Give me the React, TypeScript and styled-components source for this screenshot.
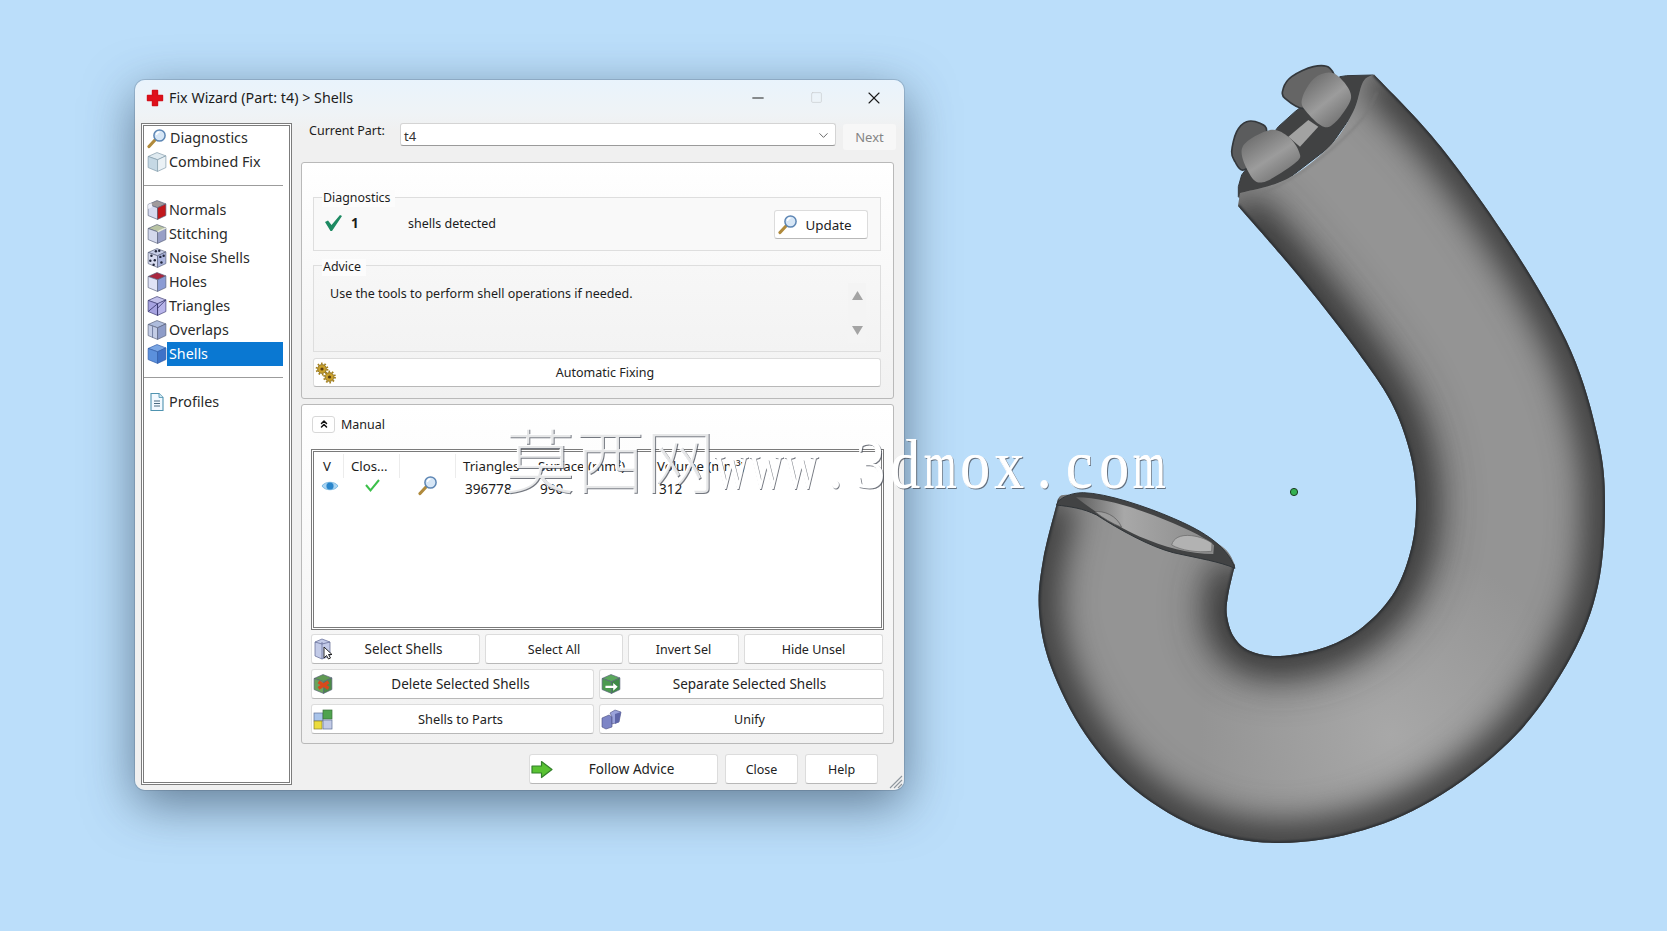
import React from "react";
import styled, { createGlobalStyle } from "styled-components";
import { ChevronDown, ChevronsUp, Minus, Square, X } from "lucide-react";

const Global = createGlobalStyle`
  html, body {
    margin: 0;
    height: 100%;
    background: #bbdefa;
    overflow: hidden;
  }
  * { box-sizing: border-box; }
`;

const Stage = styled.div`
  position: relative;
  display: flex;
  align-items: flex-start;
  width: 1667px;
  height: 931px;
  padding: 60px 0 0 135px;
  font-family: "Noto Sans", "Open Sans", sans-serif;
  color: #1c1c1c;
`;

const Win = styled.div`
  position: relative;
  display: flex;
  flex-direction: column;
  flex: 0 0 769px;
  min-width: 0;
  height: 710px;
  margin-top: 20px;
  border-radius: 10px;
  background: linear-gradient(#e9f3fc 0, #eff3f6 34px, #f0f0f0 50px);
  box-shadow: 0 14px 50px rgba(40, 62, 84, 0.62), 0 0 0 1px rgba(120, 140, 160, 0.35);
`;

const TitleBar = styled.div`
  display: flex;
  align-items: center;
  height: 35px;
  margin-bottom: 8px;
  padding: 0 1px 0 11px;
  flex: none;
`;

const Title = styled.div`
  margin-left: 5px;
  flex: 1;
  font-size: 14.3px;
`;

const Ctl = styled.div<{ $dim?: boolean }>`
  display: flex;
  align-items: center;
  justify-content: center;
  width: 58px;
  height: 35px;
  color: ${(p) => (p.$dim ? "#c6c9cc" : "#1a1a1a")};
`;

const Body = styled.div`
  display: flex;
  flex: 1;
  min-height: 0;
  padding: 0 10px 5px 6px;
  gap: 9px;
`;

const Side = styled.div`
  display: flex;
  flex-direction: column;
  flex: 0 0 151px;
  background: #fff;
  border: 3px double #7c7c7c;
  padding: 0 6px 0 3px;
`;

const SideRow = styled.div<{ $on?: boolean }>`
  display: flex;
  align-items: center;
  height: 24px;
  flex: none;
  font-size: 14.3px;

  span {
    flex: 1;
    height: 24px;
    line-height: 23px;
    padding-left: 2px;
    background: ${(p) => (p.$on ? "#0a78d2" : "transparent")};
    color: ${(p) => (p.$on ? "#fff" : "#2a2a2a")};
  }
`;

const SideIco = styled.div`
  display: flex;
  flex: 0 0 20px;
`;

const SideRule = styled.div<{ $top: number; $bottom: number }>`
  height: 1px;
  flex: none;
  background: #9c9c9c;
  margin: ${(p) => p.$top}px 0 ${(p) => p.$bottom}px -3px;
`;

const Main = styled.div`
  display: flex;
  flex-direction: column;
  flex: 1;
  min-width: 0;
`;

const PartRow = styled.div`
  display: flex;
  align-items: flex-start;
  height: 27px;
  margin-bottom: 12px;
  flex: none;
`;

const PartLabel = styled.div`
  flex: 0 0 99px;
  padding-left: 8px;
  font-size: 12.5px;
  line-height: 15px;
`;

const Combo = styled.div`
  display: flex;
  align-items: center;
  justify-content: space-between;
  flex: 0 0 436px;
  height: 23px;
  padding: 2px 4px 0 3px;
  background: #fff;
  border: 1px solid #d4d4d4;
  border-bottom-color: #9a9a9a;
  border-radius: 3px;
  font-size: 13px;
  color: #333;
`;

const NextBtn = styled.div`
  display: flex;
  align-items: center;
  justify-content: center;
  flex: 0 0 53px;
  height: 26px;
  margin: 1px -2px 0 7px;
  background: #f7f7f7;
  border-radius: 3px;
  color: #858585;
  font-size: 13px;
`;

const Panel = styled.div<{ $h: number }>`
  display: flex;
  flex-direction: column;
  height: ${(p) => p.$h}px;
  flex: none;
  border: 1px solid #b9b9b9;
  border-radius: 3px;
  background: linear-gradient(#fff, #f1f1f1);
`;

const Panel1 = styled(Panel)`
  padding: 34px 12px 0 11px;
`;

const Panel2 = styled(Panel)`
  margin-top: 5px;
  padding: 10px 8px 0 9px;
`;

const Group = styled.div<{ $h: number }>`
  height: ${(p) => p.$h}px;
  flex: none;
  border: 1px solid #dedede;
  background: #f9f9f9;
  padding: 0 12px 0 8px;
`;

const AdviceGroup = styled(Group)`
  margin-top: 14px;
  background: linear-gradient(#f7f7f7, #f3f3f3);
`;

const Legend = styled.div<{ $drop?: number }>`
  width: fit-content;
  margin-top: ${(p) => -8 + (p.$drop ?? 0)}px;
  padding: 0 5px 0 1px;
  height: 17px;
  font-size: 12.4px;
  line-height: 16px;
  background: #fcfcfc;
`;

const DiagRow = styled.div`
  display: flex;
  align-items: center;
  height: 24px;
  margin-top: 4px;
  font-size: 12.5px;
`;

const TickBox = styled.div`
  display: flex;
  margin-left: 2px;
`;

const Count = styled.div`
  width: 57px;
  margin-left: 8px;
  font-weight: 700;
  font-size: 13.5px;
`;

const Grow = styled.div`
  flex: 1;
`;

const Button = styled.div<{ $w?: number; $flex?: boolean }>`
  display: flex;
  align-items: center;
  justify-content: center;
  height: 30px;
  ${(p) => (p.$w ? `flex: 0 0 ${p.$w}px; width: ${p.$w}px;` : "")}
  ${(p) => (p.$flex ? "flex: 1;" : "")}
  background: #fff;
  border: 1px solid #dcdcdc;
  border-bottom-color: #b8b8b8;
  border-radius: 3px;
  font-size: 12.5px;
  color: #222;
`;

const UpdateBtn = styled(Button)`
  flex: 0 0 94px;
  height: 29px;
  margin-top: 3px;
  font-size: 13.5px;
  padding: 0 3px 0 2px;
`;

const BtnIco = styled.div`
  display: flex;
  flex: 0 0 22px;
  margin-left: 1px;
`;

const BtnText = styled.div<{ $size?: number }>`
  flex: 1;
  text-align: center;
  margin-right: 7px;
  font-size: ${(p) => p.$size ?? 12.5}px;
`;

const AdviceBody = styled.div`
  display: flex;
  justify-content: space-between;
  font-size: 12.5px;
`;

const AdviceText = styled.div`
  padding: 9px 0 0 8px;
  line-height: 18px;
`;

const Scroll = styled.div`
  display: flex;
  flex-direction: column;
  align-items: center;
  justify-content: space-between;
  width: 18px;
  height: 60px;
  margin-top: 7px;
  margin-right: 2px;
  padding: 8px 0;
  background: #f4f4f4;
`;

const AutoBtn = styled(Button)`
  margin-top: 6px;
  height: 29px;
  flex: none;
`;

const ManualHead = styled.div`
  display: flex;
  align-items: center;
  height: 18px;
  font-size: 12.5px;
  margin-bottom: 16px;
  flex: none;
`;

const Toggle = styled.div`
  display: flex;
  align-items: center;
  justify-content: center;
  width: 23px;
  height: 17px;
  margin: 0 6px 0 1px;
  background: #fff;
  border: 1px solid #d8d8d8;
  border-radius: 3px;
`;

const Table = styled.div`
  height: 181px;
  flex: none;
  width: 573px;
  background: #fff;
  border: 3px double #7a7a7a;
  padding: 2px 0 0 2px;
  font-size: 12.5px;
`;

const Cols = styled.div<{ $tight?: boolean }>`
  display: grid;
  grid-template-columns: 28px 56px 56px 75px 119px 1fr;
  align-items: center;
  height: 24px;
  margin-top: ${(p) => (p.$tight ? "-3px" : "0")};
`;

const Head = styled.div<{ $line?: boolean }>`
  height: 24px;
  line-height: 24px;
  padding-left: 7px;
  border-right: ${(p) => (p.$line ? "1px solid #ececec" : "0")};
  font-size: 13.2px;
  white-space: nowrap;
`;

const Cell = styled.div<{ $center?: boolean }>`
  display: flex;
  justify-content: ${(p) => (p.$center ? "center" : "flex-start")};
  padding-left: ${(p) => (p.$center ? "0" : "9px")};
  margin-top: ${(p) => (p.$center ? "-3px" : "0")};
  padding-top: ${(p) => (p.$center ? "0" : "3px")};
  font-size: 13.6px;
`;

const Rows = styled.div`
  display: flex;
  flex-direction: column;
  gap: 5px;
  margin-top: 4px;
  width: 573px;
  flex: none;
`;

const BtnRow = styled.div`
  display: flex;
  gap: 5px;
`;

const Footer = styled.div`
  display: flex;
  gap: 7px;
  padding: 10px 16px 0 228px;
  flex: none;
`;

const Grip = styled.svg`
  position: absolute;
  right: 1px;
  bottom: 1px;
`;

const Model = styled.svg`
  flex: none;
  margin-left: 134px;
`;

const Watermark = styled.div`
  position: absolute;
  left: 505px;
  top: 413px;
  display: flex;
  align-items: baseline;
  white-space: nowrap;
  color: #fff;
  pointer-events: none;
  text-shadow: 1px 1px 0 rgba(70, 75, 85, 0.75), -0.5px -0.5px 0 rgba(255, 255, 255, 0.9);
`;

const WmCjk = styled.span`
  font-family: "Noto Sans CJK SC", sans-serif;
  font-weight: 300;
  font-size: 70px;
  line-height: 90px;
  margin-right: -1px;
  color: rgba(255, 255, 255, 0.82);
`;

// the watermark font has equal-width latin letters, so each letter gets a cell
const WmGlyph = styled.span<{ $sx: number }>`
  display: inline-flex;
  justify-content: center;
  width: 34.8px;
  font-family: "Liberation Serif", serif;
  font-size: 70px;
  line-height: 90px;
  transform: scaleX(${(p) => p.$sx});
`;

type CubeProps = { top: string; left: string; right: string; line?: string; children?: React.ReactNode };

function Cube({ top, left, right, line = "#59607a", children }: CubeProps) {
  return (
    <svg width="20" height="20" viewBox="1 1 18 18">
      <path d="M2 5 10 1.500 18 4.500 10.500 8Z" fill={top} stroke={line} strokeWidth=".6" />
      <path d="M2 5 10.500 8V18.500L2 15Z" fill={left} stroke={line} strokeWidth=".6" />
      <path d="M10.500 8 18 4.500V15L10.500 18.500Z" fill={right} stroke={line} strokeWidth=".6" />
      {children}
    </svg>
  );
}

function Magnifier() {
  return (
    <svg width="21" height="21" viewBox="0 0 21 21">
      <path d="M8 12 2 18.500" stroke="#b08a3c" strokeWidth="3.2" strokeLinecap="round" />
      <circle cx="12.500" cy="7.500" r="5.600" fill="#d6e6f6" stroke="#5d86b4" strokeWidth="1.500" />
      <path d="M9.500 7a3.200 3.200 0 0 1 3-3" stroke="#fff" strokeWidth="1.300" fill="none" />
    </svg>
  );
}

function RedCross() {
  return (
    <svg width="18" height="18" viewBox="0 0 18 18">
      <path
        d="M6.500 1.500h5v5h5v5h-5v5h-5v-5h-5v-5h5z"
        fill="#e0101c"
        stroke="#d3101a"
        strokeLinejoin="round"
        strokeWidth="1.400"
      />
    </svg>
  );
}

function Tick({ big }: { big?: boolean }) {
  return big ? (
    <svg width="19" height="18" viewBox="0 0 19 18">
      <path d="M1 8 4 6.500 7.500 11 16 1 18 2 8 17H6.500z" fill="#1d8a62" />
    </svg>
  ) : (
    <svg width="17" height="15" viewBox="0 0 17 15">
      <path d="M2 7 6.500 12.500 15 2" fill="none" stroke="#3cc04a" strokeWidth="2" />
    </svg>
  );
}

function Eye() {
  return (
    <svg width="18" height="14" viewBox="0 0 18 14">
      <path d="M1 7c3-5 13-5 16 0-3 5-13 5-16 0z" fill="#a9d4f2" stroke="#6aaedc" strokeWidth=".8" />
      <circle cx="9" cy="7" r="3.600" fill="#2a86cc" />
    </svg>
  );
}

function Gears() {
  return (
    <svg width="22" height="22" viewBox="0 0 22 22">
      <g fill="#c9a02c" stroke="#6e5a1a" strokeWidth=".7">
        <circle cx="7" cy="7" r="4.400" />
        <circle cx="14.500" cy="15" r="4.400" />
      </g>
      <g fill="none" stroke="#a5811e" strokeWidth="2" strokeDasharray="1.600 1.800">
        <circle cx="7" cy="7" r="5.400" />
        <circle cx="14.500" cy="15" r="5.400" />
      </g>
      <circle cx="7" cy="7" r="1.600" fill="#5a3d12" />
      <circle cx="14.500" cy="15" r="1.600" fill="#5a3d12" />
    </svg>
  );
}

function GreenArrow() {
  return (
    <svg width="22" height="19" viewBox="0 0 22 19">
      <path
        d="M1 6h9.500V1.500L21 9.500 10.500 17.500V13H1z"
        fill="#59c232"
        stroke="#33802a"
        strokeWidth="1.200"
        strokeLinejoin="round"
      />
    </svg>
  );
}

function PartsIcon() {
  return (
    <svg width="21" height="21" viewBox="0 0 21 21">
      <rect x="1" y="4" width="9" height="8" fill="#a9c4ea" stroke="#5d6f96" strokeWidth=".7" />
      <rect x="10" y="1" width="9" height="9" fill="#4fa34e" stroke="#39703a" strokeWidth=".7" />
      <rect x="1" y="12" width="8" height="8" fill="#ecdc3c" stroke="#8a8230" strokeWidth=".7" />
      <rect x="10" y="11" width="9" height="9" fill="#c3cbe6" stroke="#5d6f96" strokeWidth=".7" />
    </svg>
  );
}

function UnifyIcon() {
  return (
    <svg width="21" height="21" viewBox="0 0 21 21">
      <path d="M1 9 8 6 11 8 11 18 5 20 1 18Z" fill="#7d85c6" stroke="#4b4f80" strokeWidth=".6" />
      <path d="M9 4 14 1 20 3 18 13 11 15 11 8Z" fill="#9aa2da" stroke="#4b4f80" strokeWidth=".6" />
      <path d="M14 5 20 3 18 13 14 15Z" fill="#5f66a8" />
    </svg>
  );
}

function DocIcon() {
  return (
    <svg width="20" height="20" viewBox="0 0 20 20">
      <path d="M4 1.500h8l4 4v13H4z" fill="#f2f9ff" stroke="#4f93b0" strokeWidth="1.100" />
      <path d="M7 9h6M7 11.500h6M7 14h6" stroke="#4a6a80" strokeWidth="1" />
      <path d="M12 1.500v4h4" fill="#d3e8f2" stroke="#4f93b0" strokeWidth=".8" />
    </svg>
  );
}

const dots = [
  [5, 8],
  [8, 12],
  [4, 12.5],
  [13, 9],
  [16, 8],
  [14, 14],
  [9, 4],
  [12, 3.5],
  [7, 16],
];

const sideGroups: { key: string; icon: React.ReactNode; on?: boolean }[][] = [
  [
    { key: "Diagnostics", icon: <Magnifier /> },
    { key: "Combined Fix", icon: <Cube top="#dfeaf0" left="#c5d8e4" right="#eaf1f5" line="#7f98a8" /> },
  ],
  [
    {
      key: "Normals",
      icon: (
        <Cube top="#a09a9c" left="#d6daf0" right="#c1181c">
          <path d="M2 5 5 3.800 6 7 2 9Z" fill="#eef0fa" />
        </Cube>
      ),
    },
    {
      key: "Stitching",
      icon: (
        <Cube top="#b9c4a4" left="#d3d8ec" right="#989fc6">
          <path d="M10.500 8 18 4.500" stroke="#e8ecd8" strokeWidth="1.400" />
        </Cube>
      ),
    },
    {
      key: "Noise Shells",
      icon: (
        <Cube top="#c6cde6" left="#d8dcf0" right="#aab4dc">
          {dots.map(([x, y], i) => (
            <circle key={i} cx={x} cy={y} r="1.100" fill="#22283c" />
          ))}
        </Cube>
      ),
    },
    { key: "Holes", icon: <Cube top="#a9273f" left="#dfe2f6" right="#8b9cd4" /> },
    {
      key: "Triangles",
      icon: (
        <Cube top="#c2c0ea" left="#a6a2e0" right="#b8b4ea" line="#3b3a70">
          <path d="M2 15 10.500 8 10.500 18.500M10.500 12 18 4.500" stroke="#3b3a70" strokeWidth=".8" fill="none" />
        </Cube>
      ),
    },
    {
      key: "Overlaps",
      icon: (
        <Cube top="#aebcdc" left="#c4cde6" right="#8e9cc8">
          <path d="M6 6.500V17" stroke="#6a769c" strokeWidth=".8" />
        </Cube>
      ),
    },
    { key: "Shells", icon: <Cube top="#7aa6e4" left="#5b90dc" right="#3e72c8" line="#2f5ba8" />, on: true },
  ],
  [{ key: "Profiles", icon: <DocIcon /> }],
];

const headers = ["V", "Clos...", "", "Triangles", "Surface (mm²)", "Volume (mm³)"];

const glyphScale: Record<string, number> = { m: 0.6, w: 0.68 };

// catmull-rom through the points, continues an open path
function smooth(pts: number[][]): string {
  let d = "";
  for (let i = 0; i < pts.length - 1; i++) {
    const p0 = pts[Math.max(i - 1, 0)];
    const p1 = pts[i];
    const p2 = pts[i + 1];
    const p3 = pts[Math.min(i + 2, pts.length - 1)];
    const c1 = [p1[0] + (p2[0] - p0[0]) / 6, p1[1] + (p2[1] - p0[1]) / 6];
    const c2 = [p2[0] - (p3[0] - p1[0]) / 6, p2[1] - (p3[1] - p1[1]) / 6];
    d += `C${c1[0]} ${c1[1]} ${c2[0]} ${c2[1]} ${p2[0]} ${p2[1]}`;
  }
  return d;
}

function closed(pts: number[][]): string {
  const n = pts.length;
  const loop = [pts[n - 1], ...pts, pts[0], pts[1]];
  let d = `M${pts[0].join(" ")}`;
  for (let i = 1; i <= n; i++) {
    const [p0, p1, p2, p3] = [loop[i - 1], loop[i], loop[i + 1], loop[i + 2]];
    const c1 = [p1[0] + (p2[0] - p0[0]) / 6, p1[1] + (p2[1] - p0[1]) / 6];
    const c2 = [p2[0] - (p3[0] - p1[0]) / 6, p2[1] - (p3[1] - p1[1]) / 6];
    d += `C${c1[0]} ${c1[1]} ${c2[0]} ${c2[1]} ${p2[0]} ${p2[1]}`;
  }
  return d + "Z";
}

const outer = [
  [1374, 74.5],
  [1441, 147],
  [1517, 254],
  [1571, 351],
  [1598, 438],
  [1605, 504],
  [1598, 586],
  [1571, 657],
  [1517, 734],
  [1441, 795],
  [1364, 830],
  [1280, 843],
  [1204, 830],
  [1135, 790],
  [1085, 734],
  [1051, 667],
  [1039, 611],
  [1043, 560],
  [1058, 499],
];
const lowerRim = [
  [1058, 499],
  [1070, 495],
  [1135, 506],
  [1192, 530],
  [1224, 548],
  [1235, 565],
];
const inner = [
  [1235, 565],
  [1228, 596],
  [1227, 616],
  [1234, 637],
  [1250, 651],
  [1280, 656],
  [1326, 647],
  [1364, 626],
  [1395, 591],
  [1412, 545],
  [1416, 499],
  [1410, 453],
  [1391, 402],
  [1357, 351],
  [1318, 300],
  [1280, 254],
  [1238, 206],
];
const upperRim = [
  [1240, 193],
  [1287, 179],
  [1330, 146],
  [1353, 112],
  [1363, 82],
  [1374, 74.5],
];
const body =
  `M${outer[0].join(" ")}` +
  smooth(outer) +
  smooth(lowerRim) +
  smooth(inner) +
  `L1240 193` +
  smooth(upperRim) +
  "Z";
const edges = `M${outer[0].join(" ")}` + smooth(outer) + `M${inner[0].join(" ")}` + smooth(inner);
const innerLine = `M${inner[0].join(" ")}` + smooth(inner);

const peg1Back = closed([
  [35, 290],
  [50, 230],
  [80, 200],
  [120, 205],
  [140, 228],
  [120, 300],
  [70, 345],
  [45, 320],
]);
const peg1 = closed([
  [68, 275],
  [150, 225],
  [205, 245],
  [237, 290],
  [228, 322],
  [128, 382],
  [85, 350],
]);
const peg2Back = closed([
  [190, 100],
  [215, 65],
  [280, 35],
  [330, 40],
  [340, 90],
  [260, 160],
  [195, 130],
]);
const peg2 = closed([
  [248, 125],
  [285, 68],
  [340, 55],
  [388, 105],
  [385, 150],
  [322, 217],
  [255, 165],
]);

const rimBottom =
  "M50 75C55 55 90 38 130 38C200 40 320 80 400 115C470 145 560 190 585 265" +
  "C540 245 480 236 400 218C330 200 240 150 170 105C130 85 90 80 50 75Z";
const holeFloor =
  "M108 52C200 52 320 95 400 130C450 152 500 175 522 196L520 222C450 222 370 200 300 170C240 145 170 100 108 52Z";
const smallPeg = "M165 95C190 92 230 105 245 142C215 130 190 115 165 95Z";
const bigPeg = "M395 195C400 175 420 163 455 167C480 170 505 180 516 190L515 214C470 218 425 212 395 195Z";

function Tube() {
  return (
    <Model width="570" height="790" viewBox="1038 60 570 790">
      <defs>
        <clipPath id="tube">
          <path d={body} />
        </clipPath>
        <filter id="soft" filterUnits="userSpaceOnUse" x="1000" y="20" width="660" height="880" colorInterpolationFilters="sRGB">
          <feGaussianBlur stdDeviation="18" />
        </filter>
        <filter id="softer" filterUnits="userSpaceOnUse" x="1000" y="20" width="660" height="880" colorInterpolationFilters="sRGB">
          <feGaussianBlur stdDeviation="28" />
        </filter>
        <filter id="tiny" filterUnits="userSpaceOnUse" x="1000" y="20" width="660" height="880" colorInterpolationFilters="sRGB">
          <feGaussianBlur stdDeviation="0.8" />
        </filter>
        <radialGradient id="glow" gradientUnits="userSpaceOnUse" cx="1390" cy="735" r="190">
          <stop offset="0" stopColor="#a8a8a8" />
          <stop offset="1" stopColor="#a8a8a8" stopOpacity="0" />
        </radialGradient>
        <linearGradient id="hole" x1="0" y1="0" x2="1" y2="0">
          <stop offset="0" stopColor="#5d5d5d" />
          <stop offset=".35" stopColor="#a8a8a8" />
          <stop offset="1" stopColor="#8a8a8a" />
        </linearGradient>
        <linearGradient id="peg" x1=".15" y1=".1" x2=".8" y2="1">
          <stop offset="0" stopColor="#6e6e6e" />
          <stop offset=".5" stopColor="#9c9c9c" />
          <stop offset=".85" stopColor="#7a7a7a" />
          <stop offset="1" stopColor="#5a5a5a" />
        </linearGradient>
      </defs>

      <g transform="translate(1220 55) scale(.3333)">
        <path
          d="M55 425 55 395 65 360 175 215 225 170 360 65 380 62 460 60 430 90 400 175 330 275 200 375 60 430Z"
          fill="#414243"
          stroke="#33383c"
          strokeWidth="3"
        />
        <path d="M205 245 265 195 295 215 240 275Z" fill="#a2a2a2" />
        <path d={peg1Back} fill="#5b5c5d" stroke="#34383c" strokeWidth="5" />
        <path d={peg1} fill="url(#peg)" />
        <path d={peg2Back} fill="#656565" stroke="#34383c" strokeWidth="5" />
        <path d={peg2} fill="url(#peg)" />
      </g>

      <g clipPath="url(#tube)">
        <rect x="1030" y="50" width="590" height="810" fill="#949494" />
        <rect x="1030" y="50" width="590" height="810" fill="url(#glow)" />
        <path d={edges} fill="none" stroke="#2a2a2a" strokeWidth="36" filter="url(#soft)" />
        <path d={innerLine} fill="none" stroke="#2d2d2d" strokeWidth="30" opacity=".4" filter="url(#softer)" />
        <path d={edges} fill="none" stroke="#2b2f33" strokeWidth="3.5" filter="url(#tiny)" />
        <path
          d="M1263 193C1300 178 1340 145 1363 118 1370 108 1374 100 1377 92"
          fill="none"
          stroke="#777"
          strokeWidth="2"
          opacity=".5"
          filter="url(#tiny)"
        />
      </g>

      <g transform="translate(1040 480) scale(.3333)">
        <path d={rimBottom} fill="#424344" stroke="#2f3438" strokeWidth="3" />
        <path d={holeFloor} fill="url(#hole)" />
        <path d={smallPeg} fill="#9d9d9d" stroke="#555" strokeWidth="2" />
        <path d={bigPeg} fill="#b2b2b2" stroke="#666" strokeWidth="2" />
      </g>

      <circle cx="1294" cy="492" r="3.600" fill="#35b050" stroke="#1c3b22" strokeWidth="1" />
    </Model>
  );
}

export default function App() {
  return (
    <Stage>
      <Global />
      <Win>
        <TitleBar>
          <RedCross />
          <Title>Fix Wizard (Part: t4) &gt; Shells</Title>
          <Ctl>
            <Minus size={18} strokeWidth={1.3} />
          </Ctl>
          <Ctl $dim>
            <Square size={13} strokeWidth={1.2} />
          </Ctl>
          <Ctl>
            <X size={20} strokeWidth={1.3} />
          </Ctl>
        </TitleBar>
        <Body>
          <Side>
            {sideGroups.map((group, g) => (
              <React.Fragment key={g}>
                {g > 0 && <SideRule $top={11} $bottom={12} />}
                {group.map((row) => (
                  <SideRow key={row.key} $on={row.on}>
                    <SideIco>{row.icon}</SideIco>
                    <span>{row.key}</span>
                  </SideRow>
                ))}
              </React.Fragment>
            ))}
          </Side>
          <Main>
            <PartRow>
              <PartLabel>Current Part:</PartLabel>
              <Combo>
                t4
                <ChevronDown size={15} strokeWidth={1.4} color="#555" />
              </Combo>
              <NextBtn>Next</NextBtn>
            </PartRow>
            <Panel1 $h={237}>
              <Group $h={54}>
                <Legend>Diagnostics</Legend>
                <DiagRow>
                  <TickBox>
                    <Tick big />
                  </TickBox>
                  <Count>1</Count>
                  shells detected
                  <Grow />
                  <UpdateBtn>
                    <BtnIco>
                      <Magnifier />
                    </BtnIco>
                    <BtnText $size={13.4}>Update</BtnText>
                  </UpdateBtn>
                </DiagRow>
              </Group>
              <AdviceGroup $h={87}>
                <Legend $drop={1}>Advice</Legend>
                <AdviceBody>
                  <AdviceText>Use the tools to perform shell operations if needed.</AdviceText>
                  <Scroll>
                    <svg width="11" height="9" viewBox="0 0 11 9">
                      <path d="M5.500 0 11 9H0z" fill="#a4a4a4" />
                    </svg>
                    <svg width="11" height="9" viewBox="0 0 11 9">
                      <path d="M5.500 9 11 0H0z" fill="#a4a4a4" />
                    </svg>
                  </Scroll>
                </AdviceBody>
              </AdviceGroup>
              <AutoBtn>
                <BtnIco>
                  <Gears />
                </BtnIco>
                <BtnText>Automatic Fixing</BtnText>
              </AutoBtn>
            </Panel1>
            <Panel2 $h={340}>
              <ManualHead>
                <Toggle>
                  <ChevronsUp size={12} strokeWidth={3} color="#111" />
                </Toggle>
                Manual
              </ManualHead>
              <Table>
                <Cols>
                  {headers.map((h, i) => (
                    <Head key={i} $line={i < 3}>
                      {h}
                    </Head>
                  ))}
                </Cols>
                <Cols $tight>
                  <Cell $center>
                    <Eye />
                  </Cell>
                  <Cell $center>
                    <Tick />
                  </Cell>
                  <Cell $center>
                    <Magnifier />
                  </Cell>
                  <Cell>396778</Cell>
                  <Cell>990</Cell>
                  <Cell>312</Cell>
                </Cols>
              </Table>
              <Rows>
                <BtnRow>
                  <Button $w={169}>
                    <BtnIco>
                      <svg width="22" height="22" viewBox="0 0 22 22">
                        <path d="M2 4 9 1 17 4V18L9 21 2 18Z" fill="#c3cbe8" stroke="#5d6690" strokeWidth=".7" />
                        <path d="M9 4V21M2 4 9 6 17 4" stroke="#5d6690" strokeWidth=".7" fill="none" />
                        <path d="M11 9V20L13.500 17.500 15.500 21 17.500 20 15.500 16.500H19Z" fill="#fff" stroke="#111" strokeWidth=".9" />
                      </svg>
                    </BtnIco>
                    <BtnText $size={13.5}>Select Shells</BtnText>
                  </Button>
                  <Button $w={138}>Select All</Button>
                  <Button $w={111}>Invert Sel</Button>
                  <Button $w={139}>Hide Unsel</Button>
                </BtnRow>
                <BtnRow>
                  <Button $w={283}>
                    <BtnIco>
                      <Cube top="#5f9a52" left="#6aa45c" right="#4c8a48">
                        <path d="M6 8 15 14M15 8 6 14" stroke="#d8481c" strokeWidth="3" />
                      </Cube>
                    </BtnIco>
                    <BtnText $size={13.5}>Delete Selected Shells</BtnText>
                  </Button>
                  <Button $flex>
                    <BtnIco>
                      <Cube top="#5aa85c" left="#4c9a50" right="#3f8a48">
                        <path d="M5 11.500h7V9l4 3.500-4 3.500v-2.500H5z" fill="#fff" />
                      </Cube>
                    </BtnIco>
                    <BtnText $size={13.5}>Separate Selected Shells</BtnText>
                  </Button>
                </BtnRow>
                <BtnRow>
                  <Button $w={283}>
                    <BtnIco>
                      <PartsIcon />
                    </BtnIco>
                    <BtnText $size={12.8}>Shells to Parts</BtnText>
                  </Button>
                  <Button $flex>
                    <BtnIco>
                      <UnifyIcon />
                    </BtnIco>
                    <BtnText>Unify</BtnText>
                  </Button>
                </BtnRow>
              </Rows>
            </Panel2>
            <Footer>
              <Button $w={189}>
                <BtnIco>
                  <GreenArrow />
                </BtnIco>
                <BtnText $size={13.5}>Follow Advice</BtnText>
              </Button>
              <Button $w={73}>Close</Button>
              <Button $w={73}>Help</Button>
            </Footer>
          </Main>
        </Body>
        <Grip width="14" height="14" viewBox="0 0 14 14">
          <path d="M13 1 1 13M13 5 5 13M13 9 9 13" stroke="#8f979e" strokeWidth="1.100" />
        </Grip>
      </Win>
      <Tube />
      <Watermark>
        <WmCjk>莫西网</WmCjk>
        {"www.3dmox.com".split("").map((c, i) => (
          <WmGlyph key={i} $sx={glyphScale[c] ?? 0.85}>
            {c}
          </WmGlyph>
        ))}
      </Watermark>
    </Stage>
  );
}
